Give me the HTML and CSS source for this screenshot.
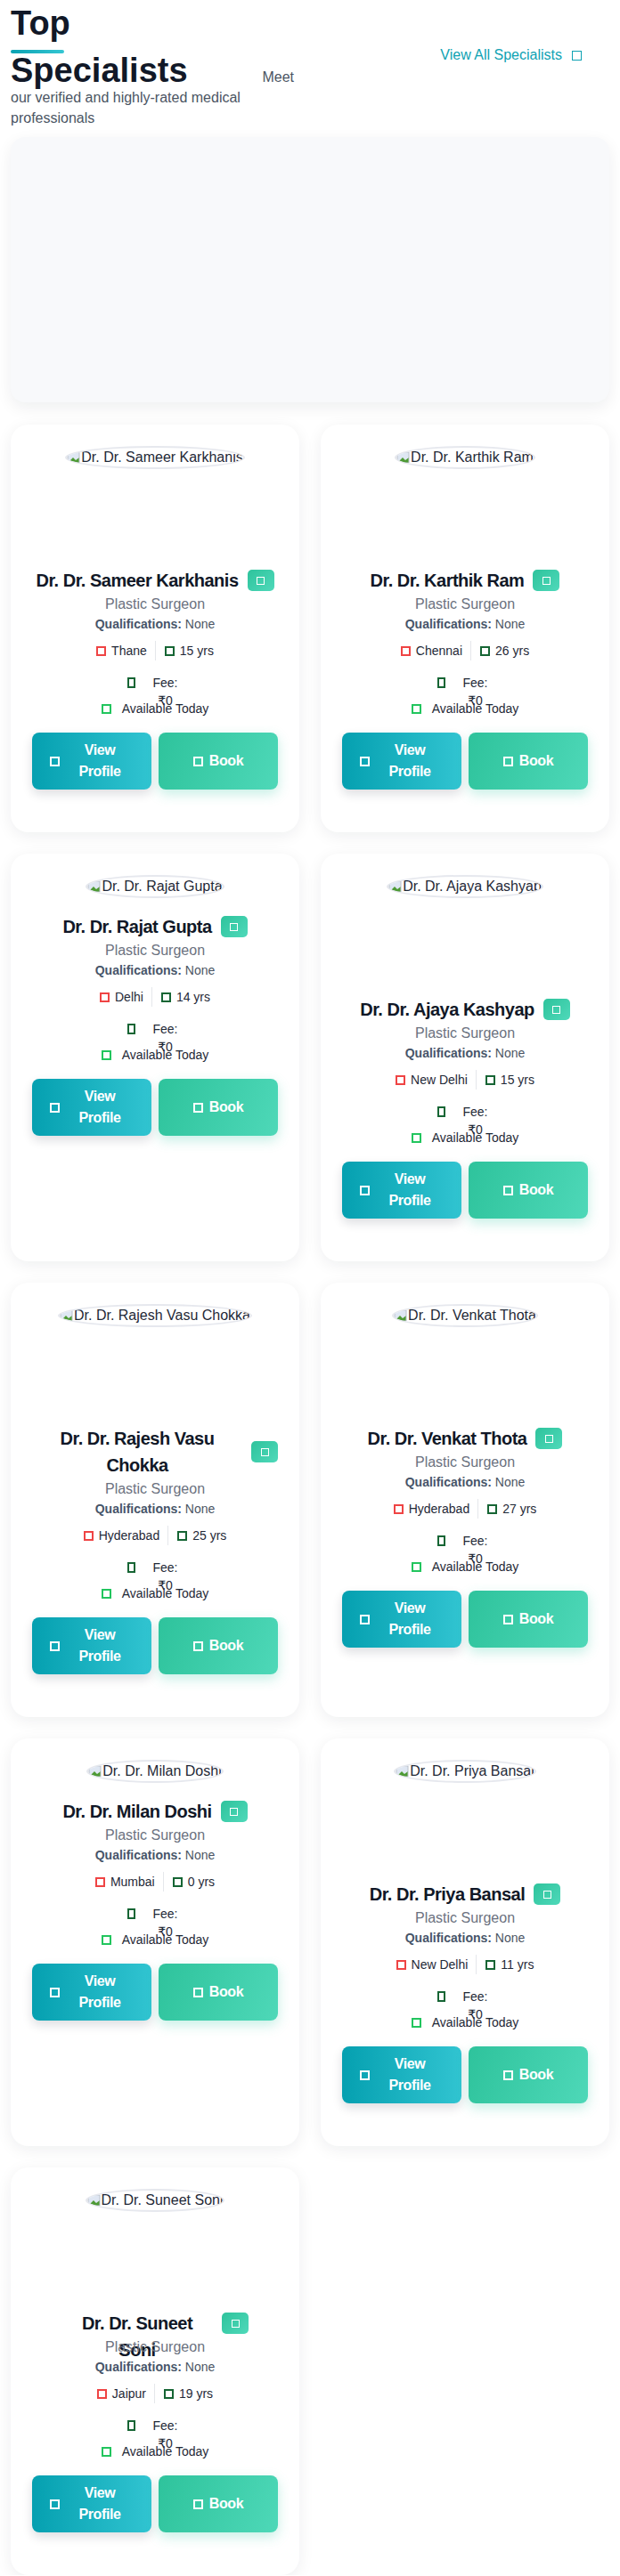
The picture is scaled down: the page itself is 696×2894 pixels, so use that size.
FILE: index.html
```html
<!DOCTYPE html>
<html lang="en">
<head>
<meta charset="utf-8">
<title>Top Specialists</title>
<link rel="stylesheet" href="styles.css">
</head>
<body>
<main class="page">
  <header class="section-head">
    <div class="heading">
      <h2 class="title">Top Specialists</h2> <p class="subtitle">Meet our verified and highly-rated medical professionals</p>
    </div>
    <a class="view-all" href="#">View All Specialists <span class="ico ico-link"></span></a>
  </header>

  <div class="feature-box"></div>

  <section class="grid">
    <article class="card">
      <div class="avatar-wrap"><span class="avatar"><svg class="broken" width="16" height="16" viewBox="0 0 16 16"><path d="M1 2h13v12H1z" fill="#dfe7f3"/><path d="M1 14l6-6 3 3 4-3v6z" fill="#4e9a35"/><path d="M1 2h13v12H1z" fill="none" stroke="#b9c0c9"/></svg>Dr. Dr. Sameer Karkhanis</span></div>
      <div class="name-row"><h3 class="name">Dr. Dr. Sameer Karkhanis</h3><span class="badge"><span class="ico ico-badge"></span></span></div>
      <p class="specialty">Plastic Surgeon</p>
      <p class="qual"><b>Qualifications:</b> None</p>
      <div class="meta"><span class="meta-item"><span class="ico ico-loc"></span>Thane</span><span class="meta-item"><span class="ico ico-exp"></span>15 yrs</span></div>
      <div class="fee"><span class="ico ico-fee"></span><span class="fee-text">Fee: ₹0</span></div>
      <div class="avail"><span class="ico ico-avail"></span>Available Today</div>
      <div class="actions"><a class="btn btn-profile" href="#"><span class="ico ico-btn"></span><span class="btn-text">View Profile</span></a><a class="btn btn-book" href="#"><span class="ico ico-btn"></span><span>Book</span></a></div>
    </article>

    <article class="card">
      <div class="avatar-wrap"><span class="avatar"><svg class="broken" width="16" height="16" viewBox="0 0 16 16"><path d="M1 2h13v12H1z" fill="#dfe7f3"/><path d="M1 14l6-6 3 3 4-3v6z" fill="#4e9a35"/><path d="M1 2h13v12H1z" fill="none" stroke="#b9c0c9"/></svg>Dr. Dr. Karthik Ram</span></div>
      <div class="name-row"><h3 class="name">Dr. Dr. Karthik Ram</h3><span class="badge"><span class="ico ico-badge"></span></span></div>
      <p class="specialty">Plastic Surgeon</p>
      <p class="qual"><b>Qualifications:</b> None</p>
      <div class="meta"><span class="meta-item"><span class="ico ico-loc"></span>Chennai</span><span class="meta-item"><span class="ico ico-exp"></span>26 yrs</span></div>
      <div class="fee"><span class="ico ico-fee"></span><span class="fee-text">Fee: ₹0</span></div>
      <div class="avail"><span class="ico ico-avail"></span>Available Today</div>
      <div class="actions"><a class="btn btn-profile" href="#"><span class="ico ico-btn"></span><span class="btn-text">View Profile</span></a><a class="btn btn-book" href="#"><span class="ico ico-btn"></span><span>Book</span></a></div>
    </article>

    <article class="card">
      <div class="avatar-wrap avatar-wrap--compact"><span class="avatar"><svg class="broken" width="16" height="16" viewBox="0 0 16 16"><path d="M1 2h13v12H1z" fill="#dfe7f3"/><path d="M1 14l6-6 3 3 4-3v6z" fill="#4e9a35"/><path d="M1 2h13v12H1z" fill="none" stroke="#b9c0c9"/></svg>Dr. Dr. Rajat Gupta</span></div>
      <div class="name-row"><h3 class="name">Dr. Dr. Rajat Gupta</h3><span class="badge"><span class="ico ico-badge"></span></span></div>
      <p class="specialty">Plastic Surgeon</p>
      <p class="qual"><b>Qualifications:</b> None</p>
      <div class="meta"><span class="meta-item"><span class="ico ico-loc"></span>Delhi</span><span class="meta-item"><span class="ico ico-exp"></span>14 yrs</span></div>
      <div class="fee"><span class="ico ico-fee"></span><span class="fee-text">Fee: ₹0</span></div>
      <div class="avail"><span class="ico ico-avail"></span>Available Today</div>
      <div class="actions"><a class="btn btn-profile" href="#"><span class="ico ico-btn"></span><span class="btn-text">View Profile</span></a><a class="btn btn-book" href="#"><span class="ico ico-btn"></span><span>Book</span></a></div>
    </article>

    <article class="card">
      <div class="avatar-wrap"><span class="avatar"><svg class="broken" width="16" height="16" viewBox="0 0 16 16"><path d="M1 2h13v12H1z" fill="#dfe7f3"/><path d="M1 14l6-6 3 3 4-3v6z" fill="#4e9a35"/><path d="M1 2h13v12H1z" fill="none" stroke="#b9c0c9"/></svg>Dr. Dr. Ajaya Kashyap</span></div>
      <div class="name-row"><h3 class="name">Dr. Dr. Ajaya Kashyap</h3><span class="badge"><span class="ico ico-badge"></span></span></div>
      <p class="specialty">Plastic Surgeon</p>
      <p class="qual"><b>Qualifications:</b> None</p>
      <div class="meta"><span class="meta-item"><span class="ico ico-loc"></span>New Delhi</span><span class="meta-item"><span class="ico ico-exp"></span>15 yrs</span></div>
      <div class="fee"><span class="ico ico-fee"></span><span class="fee-text">Fee: ₹0</span></div>
      <div class="avail"><span class="ico ico-avail"></span>Available Today</div>
      <div class="actions"><a class="btn btn-profile" href="#"><span class="ico ico-btn"></span><span class="btn-text">View Profile</span></a><a class="btn btn-book" href="#"><span class="ico ico-btn"></span><span>Book</span></a></div>
    </article>

    <article class="card">
      <div class="avatar-wrap"><span class="avatar"><svg class="broken" width="16" height="16" viewBox="0 0 16 16"><path d="M1 2h13v12H1z" fill="#dfe7f3"/><path d="M1 14l6-6 3 3 4-3v6z" fill="#4e9a35"/><path d="M1 2h13v12H1z" fill="none" stroke="#b9c0c9"/></svg>Dr. Dr. Rajesh Vasu Chokka</span></div>
      <div class="name-row"><h3 class="name">Dr. Dr. Rajesh Vasu Chokka</h3><span class="badge"><span class="ico ico-badge"></span></span></div>
      <p class="specialty">Plastic Surgeon</p>
      <p class="qual"><b>Qualifications:</b> None</p>
      <div class="meta"><span class="meta-item"><span class="ico ico-loc"></span>Hyderabad</span><span class="meta-item"><span class="ico ico-exp"></span>25 yrs</span></div>
      <div class="fee"><span class="ico ico-fee"></span><span class="fee-text">Fee: ₹0</span></div>
      <div class="avail"><span class="ico ico-avail"></span>Available Today</div>
      <div class="actions"><a class="btn btn-profile" href="#"><span class="ico ico-btn"></span><span class="btn-text">View Profile</span></a><a class="btn btn-book" href="#"><span class="ico ico-btn"></span><span>Book</span></a></div>
    </article>

    <article class="card">
      <div class="avatar-wrap"><span class="avatar"><svg class="broken" width="16" height="16" viewBox="0 0 16 16"><path d="M1 2h13v12H1z" fill="#dfe7f3"/><path d="M1 14l6-6 3 3 4-3v6z" fill="#4e9a35"/><path d="M1 2h13v12H1z" fill="none" stroke="#b9c0c9"/></svg>Dr. Dr. Venkat Thota</span></div>
      <div class="name-row"><h3 class="name">Dr. Dr. Venkat Thota</h3><span class="badge"><span class="ico ico-badge"></span></span></div>
      <p class="specialty">Plastic Surgeon</p>
      <p class="qual"><b>Qualifications:</b> None</p>
      <div class="meta"><span class="meta-item"><span class="ico ico-loc"></span>Hyderabad</span><span class="meta-item"><span class="ico ico-exp"></span>27 yrs</span></div>
      <div class="fee"><span class="ico ico-fee"></span><span class="fee-text">Fee: ₹0</span></div>
      <div class="avail"><span class="ico ico-avail"></span>Available Today</div>
      <div class="actions"><a class="btn btn-profile" href="#"><span class="ico ico-btn"></span><span class="btn-text">View Profile</span></a><a class="btn btn-book" href="#"><span class="ico ico-btn"></span><span>Book</span></a></div>
    </article>

    <article class="card">
      <div class="avatar-wrap avatar-wrap--compact"><span class="avatar"><svg class="broken" width="16" height="16" viewBox="0 0 16 16"><path d="M1 2h13v12H1z" fill="#dfe7f3"/><path d="M1 14l6-6 3 3 4-3v6z" fill="#4e9a35"/><path d="M1 2h13v12H1z" fill="none" stroke="#b9c0c9"/></svg>Dr. Dr. Milan Doshi</span></div>
      <div class="name-row"><h3 class="name">Dr. Dr. Milan Doshi</h3><span class="badge"><span class="ico ico-badge"></span></span></div>
      <p class="specialty">Plastic Surgeon</p>
      <p class="qual"><b>Qualifications:</b> None</p>
      <div class="meta"><span class="meta-item"><span class="ico ico-loc"></span>Mumbai</span><span class="meta-item"><span class="ico ico-exp"></span>0 yrs</span></div>
      <div class="fee"><span class="ico ico-fee"></span><span class="fee-text">Fee: ₹0</span></div>
      <div class="avail"><span class="ico ico-avail"></span>Available Today</div>
      <div class="actions"><a class="btn btn-profile" href="#"><span class="ico ico-btn"></span><span class="btn-text">View Profile</span></a><a class="btn btn-book" href="#"><span class="ico ico-btn"></span><span>Book</span></a></div>
    </article>

    <article class="card">
      <div class="avatar-wrap"><span class="avatar"><svg class="broken" width="16" height="16" viewBox="0 0 16 16"><path d="M1 2h13v12H1z" fill="#dfe7f3"/><path d="M1 14l6-6 3 3 4-3v6z" fill="#4e9a35"/><path d="M1 2h13v12H1z" fill="none" stroke="#b9c0c9"/></svg>Dr. Dr. Priya Bansal</span></div>
      <div class="name-row"><h3 class="name">Dr. Dr. Priya Bansal</h3><span class="badge"><span class="ico ico-badge"></span></span></div>
      <p class="specialty">Plastic Surgeon</p>
      <p class="qual"><b>Qualifications:</b> None</p>
      <div class="meta"><span class="meta-item"><span class="ico ico-loc"></span>New Delhi</span><span class="meta-item"><span class="ico ico-exp"></span>11 yrs</span></div>
      <div class="fee"><span class="ico ico-fee"></span><span class="fee-text">Fee: ₹0</span></div>
      <div class="avail"><span class="ico ico-avail"></span>Available Today</div>
      <div class="actions"><a class="btn btn-profile" href="#"><span class="ico ico-btn"></span><span class="btn-text">View Profile</span></a><a class="btn btn-book" href="#"><span class="ico ico-btn"></span><span>Book</span></a></div>
    </article>

    <article class="card">
      <div class="avatar-wrap"><span class="avatar"><svg class="broken" width="16" height="16" viewBox="0 0 16 16"><path d="M1 2h13v12H1z" fill="#dfe7f3"/><path d="M1 14l6-6 3 3 4-3v6z" fill="#4e9a35"/><path d="M1 2h13v12H1z" fill="none" stroke="#b9c0c9"/></svg>Dr. Dr. Suneet Soni</span></div>
      <div class="name-row"><h3 class="name name--clamped">Dr. Dr. Suneet Soni</h3><span class="badge"><span class="ico ico-badge"></span></span></div>
      <p class="specialty">Plastic Surgeon</p>
      <p class="qual"><b>Qualifications:</b> None</p>
      <div class="meta"><span class="meta-item"><span class="ico ico-loc"></span>Jaipur</span><span class="meta-item"><span class="ico ico-exp"></span>19 yrs</span></div>
      <div class="fee"><span class="ico ico-fee"></span><span class="fee-text">Fee: ₹0</span></div>
      <div class="avail"><span class="ico ico-avail"></span>Available Today</div>
      <div class="actions"><a class="btn btn-profile" href="#"><span class="ico ico-btn"></span><span class="btn-text">View Profile</span></a><a class="btn btn-book" href="#"><span class="ico ico-btn"></span><span>Book</span></a></div>
    </article>
  </section>
</main>
</body>
</html>
```

FILE: styles.css
```css
* { box-sizing: border-box; }

html, body {
  margin: 0;
  padding: 0;
  background: #ffffff;
}

body {
  font-family: "Liberation Sans", Arial, "DejaVu Sans", sans-serif;
  color: #1f2937;
}

.page {
  padding: 0 12px;
}

/* ---------- header ---------- */
.section-head {
  display: flex;
  justify-content: space-between;
  align-items: flex-start;
  margin-bottom: 10px;
}

.heading {
  width: 340px;
  font-size: 16px;
  line-height: 23px;
  color: #4b5563;
}

.title {
  position: relative;
  display: inline-block;
  width: 270px;
  margin: 0 8px -8px 0;
  font-size: 38px;
  line-height: 53px;
  font-weight: 700;
  color: #111827;
  vertical-align: baseline;
}

.title::after {
  content: "";
  position: absolute;
  left: 0;
  top: 56px;
  width: 60px;
  height: 4px;
  border-radius: 2px;
  background: linear-gradient(90deg, #0aa2b2, #35c6d3);
}

.subtitle {
  display: inline;
  margin: 0;
}

.view-all {
  display: flex;
  align-items: center;
  gap: 11px;
  margin: 50px 31px 0 0;
  font-size: 16px;
  line-height: 24px;
  color: #0ea2b3;
  text-decoration: none;
  white-space: nowrap;
}

/* ---------- feature box ---------- */
.feature-box {
  height: 298px;
  border-radius: 16px;
  background: #f8f9fb;
  box-shadow: 0 6px 18px rgba(15, 23, 42, 0.07);
  margin-bottom: 25px;
}

/* ---------- grid ---------- */
.grid {
  display: grid;
  grid-template-columns: 1fr 1fr;
  gap: 24px;
}

.card {
  background: #ffffff;
  border-radius: 20px;
  box-shadow: 0 4px 18px rgba(15, 23, 42, 0.07);
  padding: 24px 24px 48px;
  text-align: center;
  display: flex;
  flex-direction: column;
}

.avatar-wrap {
  display: flex;
  justify-content: center;
  align-items: flex-start;
  height: 120px;
  margin-bottom: 16px;
}

.avatar-wrap--compact {
  height: 27px;
}

.avatar {
  display: inline-flex;
  align-items: center;
  height: 26px;
  border: 2px solid #e6e8ee;
  border-radius: 50%;
  overflow: hidden;
  white-space: nowrap;
  font-size: 16px;
  line-height: 20px;
  color: #1f2937;
}

.broken {
  flex: none;
  display: block;
}

.name-row {
  display: flex;
  justify-content: center;
  align-items: center;
  gap: 10px;
}

.name {
  margin: 0;
  font-size: 20px;
  line-height: 30px;
  font-weight: 700;
  letter-spacing: -0.5px;
  color: #111827;
  text-align: center;
}

.name--clamped {
  flex: none;
  width: 170px;
  height: 30px;
}

.badge {
  flex: none;
  display: flex;
  align-items: center;
  justify-content: center;
  width: 30px;
  height: 24px;
  border-radius: 5px;
  background: linear-gradient(135deg, #2ec39c, #4fd9ba);
}

.specialty {
  margin: 0;
  font-size: 16px;
  line-height: 24px;
  color: #6b7280;
}

.qual {
  margin: 0;
  font-size: 14px;
  line-height: 20px;
  color: #4b5563;
}

.qual b {
  color: #475569;
}

.meta {
  display: flex;
  justify-content: center;
  height: 22px;
  margin-top: 9px;
  font-size: 14px;
  line-height: 22px;
  color: #1f2937;
}

.meta-item {
  display: flex;
  align-items: center;
  gap: 6px;
}

.meta-item:first-child {
  padding-right: 9px;
}

.meta-item + .meta-item {
  border-left: 1px solid #e5e7eb;
  padding-left: 10px;
}

.fee {
  display: flex;
  justify-content: center;
  align-items: flex-start;
  gap: 14px;
  height: 20px;
  margin-top: 15px;
  font-size: 14px;
  line-height: 20px;
  color: #1f2937;
}

.fee-text {
  width: 40px;
  text-align: center;
}

.avail {
  display: flex;
  justify-content: center;
  align-items: center;
  gap: 12px;
  height: 20px;
  margin-top: 9px;
  font-size: 14px;
  line-height: 20px;
  color: #1f2937;
}

.actions {
  display: grid;
  grid-template-columns: 1fr 1fr;
  gap: 8px;
  margin-top: 17px;
}

.btn {
  display: flex;
  align-items: center;
  justify-content: center;
  gap: 7px;
  padding: 8px 20px;
  border-radius: 8px;
  color: #ffffff;
  font-size: 16px;
  line-height: 24px;
  font-weight: 700;
  letter-spacing: -0.4px;
  text-decoration: none;
}

.btn-profile {
  background: linear-gradient(90deg, #05a0b0, #31c4d1);
  box-shadow: 0 5px 12px rgba(15, 23, 42, 0.14);
}

.btn-book {
  background: linear-gradient(110deg, #2ec39c, #4ed8b8);
  box-shadow: 0 5px 14px rgba(46, 196, 160, 0.28);
}

.btn-text {
  text-align: center;
}

/* ---------- icon placeholders ---------- */
.ico {
  display: inline-block;
  flex: none;
  width: 11px;
  height: 11px;
  border: 2px solid currentColor;
}

.ico-link { color: #0ea2b3; border-width: 1.6px; }
.ico-badge { width: 9px; height: 9px; color: #ffffff; border-width: 1.6px; }
.ico-loc { color: #ef4444; }
.ico-exp { color: #166534; }
.ico-fee { width: 9px; height: 12px; margin-top: 4px; color: #166534; }
.ico-avail { color: #22c55e; }
.ico-btn { color: #ffffff; }
```
